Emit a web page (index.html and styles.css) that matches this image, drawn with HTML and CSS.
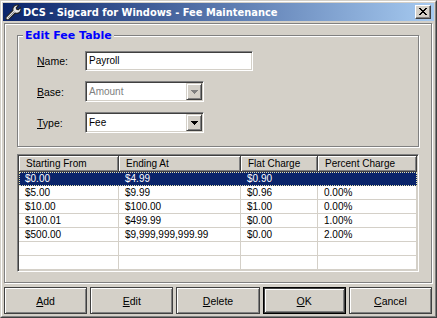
FILE: index.html
```html
<!DOCTYPE html>
<html>
<head>
<meta charset="utf-8">
<link rel="stylesheet" href="styles.css">
</head>
<body>
<div class="window">
  <div class="frame">
    <div class="titlebar">
      <svg class="app-icon" viewBox="0 0 16 16" width="16" height="16">
        <path d="M1.5 12.8 L8 6.3 A4.2 4.2 0 0 1 13.6 1.3 L11.2 3.8 L11.7 5.3 L13.2 5.8 L15.6 3.4 A4.2 4.2 0 0 1 10.2 9 L3.8 15.4 A1.7 1.7 0 0 1 1.5 12.8 Z" fill="#e8e8e8" stroke="#202020" stroke-width="1.1" stroke-linejoin="round"/>
        <path d="M3 14 L9.5 7.5" stroke="#909090" stroke-width="1"/>
      </svg>
      <span class="title">DCS - Sigcard for Windows - Fee Maintenance</span>
      <div class="close">
        <svg width="8" height="7" viewBox="0 0 8 7" shape-rendering="crispEdges">
          <path d="M0 0H2V1H3V2H5V1H6V0H8V1H7V2H6V3H5V4H6V5H7V6H8V7H6V6H5V5H3V6H2V7H0V6H1V5H2V4H3V3H2V2H1V1H0Z" fill="#000"/>
        </svg>
      </div>
    </div>
    <div class="client">
      <div class="panel">
        <fieldset class="group">
          <legend>Edit Fee Table</legend>
          <div class="form">
            <span class="lbl"><u>N</u>ame:</span>
            <div class="textbox">Payroll</div>
            <span class="lbl"><u>B</u>ase:</span>
            <div class="combo disabled">
              <span class="value">Amount</span>
              <span class="drop"><svg width="7" height="4" viewBox="0 0 7 4" shape-rendering="crispEdges"><path d="M0 0H7V1H6V2H5V3H4V4H3V3H2V2H1V1H0Z"/></svg></span>
            </div>
            <span class="lbl"><u>T</u>ype:</span>
            <div class="combo">
              <span class="value">Fee</span>
              <span class="drop"><svg width="7" height="4" viewBox="0 0 7 4" shape-rendering="crispEdges"><path d="M0 0H7V1H6V2H5V3H4V4H3V3H2V2H1V1H0Z"/></svg></span>
            </div>
          </div>
        </fieldset>
        <div class="listview">
          <div class="row head">
            <div class="hcell">Starting From</div>
            <div class="hcell">Ending At</div>
            <div class="hcell">Flat Charge</div>
            <div class="hcell">Percent Charge</div>
          </div>
          <div class="row sel">
            <div class="cell">$0.00</div><div class="cell">$4.99</div><div class="cell">$0.90</div><div class="cell"></div>
          </div>
          <div class="row">
            <div class="cell">$5.00</div><div class="cell">$9.99</div><div class="cell">$0.96</div><div class="cell">0.00%</div>
          </div>
          <div class="row">
            <div class="cell">$10.00</div><div class="cell">$100.00</div><div class="cell">$1.00</div><div class="cell">0.00%</div>
          </div>
          <div class="row">
            <div class="cell">$100.01</div><div class="cell">$499.99</div><div class="cell">$0.00</div><div class="cell">1.00%</div>
          </div>
          <div class="row">
            <div class="cell">$500.00</div><div class="cell">$9,999,999,999.99</div><div class="cell">$0.00</div><div class="cell">2.00%</div>
          </div>
          <div class="row">
            <div class="cell"></div><div class="cell"></div><div class="cell"></div><div class="cell"></div>
          </div>
          <div class="row">
            <div class="cell"></div><div class="cell"></div><div class="cell"></div><div class="cell"></div>
          </div>
        </div>
      </div>
      <div class="buttons">
        <div class="btn"><span><u>A</u>dd</span></div>
        <div class="btn"><span><u>E</u>dit</span></div>
        <div class="btn"><span><u>D</u>elete</span></div>
        <div class="btn default"><span><u>O</u>K</span></div>
        <div class="btn"><span><u>C</u>ancel</span></div>
      </div>
    </div>
  </div>
</div>
</body>
</html>
```

FILE: styles.css
```css
html, body {
  margin: 0;
  padding: 0;
  background: #d4d0c8;
}
body {
  font-family: "Liberation Sans", Arial, sans-serif;
  font-size: 10px;
  color: #000;
}
.window {
  width: 437px;
  height: 318px;
  box-sizing: border-box;
  border: 1px solid;
  border-color: #d4d0c8 #404040 #404040 #d4d0c8;
  background: #d4d0c8;
}
.frame {
  height: 100%;
  box-sizing: border-box;
  border: 1px solid;
  border-color: #fff #808080 #808080 #fff;
  padding: 1px;
  display: flex;
  flex-direction: column;
}
.titlebar {
  height: 18px;
  flex: none;
  display: flex;
  align-items: center;
  padding: 0 3px 0 2px;
  background: linear-gradient(to right, #0a246a, #a6caf0);
  color: #fff;
}
.app-icon {
  flex: none;
  margin-right: 2px;
}
.title {
  flex: 1;
  font-family: "DejaVu Sans", Verdana, sans-serif;
  font-weight: bold;
  font-size: 9.9px;
  white-space: nowrap;
  overflow: hidden;
}
.close {
  width: 16px;
  height: 14px;
  box-sizing: border-box;
  flex: none;
  background: #d4d0c8;
  border: 1px solid;
  border-color: #fff #404040 #404040 #fff;
  box-shadow: inset -1px -1px #808080;
  display: flex;
  align-items: center;
  justify-content: center;
  padding: 0 1px 1px 0;
}
.client {
  flex: 1;
  display: flex;
  flex-direction: column;
  gap: 4px;
  padding: 2px 2px 1px 1px;
}
.panel {
  height: 260px;
  flex: none;
  box-sizing: border-box;
  border: 1px solid #808080;
  box-shadow: inset 1px 1px #fff, 1px 1px #fff;
  padding: 5px 12px 10px 12px;
  display: flex;
  flex-direction: column;
  gap: 7px;
}
.group {
  margin: 0;
  padding: 0;
  border: 1px solid #808080;
  box-shadow: inset 1px 1px #fff, 1px 1px #fff;
  min-width: 0;
}
.group legend {
  margin-left: 5px;
  padding: 0 2px;
  background: #d4d0c8;
  color: #0000ff;
  font-family: "DejaVu Sans", Verdana, sans-serif;
  font-weight: bold;
  font-size: 11px;
  line-height: 13px;
}
.form {
  display: grid;
  grid-template-columns: 48px auto;
  row-gap: 10px;
  align-items: center;
  justify-items: start;
  padding: 9px 0 13px 19px;
}
.lbl {
  font-size: 10.5px;
}
.textbox, .combo {
  box-sizing: border-box;
  background: #fff;
  border: 1px solid;
  border-color: #808080 #fff #fff #808080;
  box-shadow: inset 1px 1px #404040, inset -1px -1px #d4d0c8;
}
.textbox {
  width: 168px;
  height: 20px;
  padding: 0 3px;
  line-height: 18px;
}
.combo {
  width: 119px;
  height: 21px;
  padding: 1px;
  display: flex;
}
.combo .value {
  flex: 1;
  padding-left: 2px;
  line-height: 17px;
}
.combo.disabled .value {
  color: #808080;
}
.drop {
  width: 16px;
  flex: none;
  box-sizing: border-box;
  background: #d4d0c8;
  border: 1px solid;
  border-color: #d4d0c8 #404040 #404040 #d4d0c8;
  box-shadow: inset 1px 1px #fff, inset -1px -1px #808080;
  display: flex;
  align-items: center;
  justify-content: center;
}
.drop svg {
  fill: #000;
}
.combo.disabled .drop svg {
  fill: #808080;
}
.listview {
  height: 118px;
  flex: none;
  box-sizing: border-box;
  background: #fff;
  border: 1px solid;
  border-color: #808080 #fff #fff #808080;
  box-shadow: inset 1px 1px #404040, inset -1px -1px #d4d0c8;
  padding: 1px;
  overflow: hidden;
}
.row {
  display: grid;
  grid-template-columns: 100px 122px 77px 99px;
  height: 14px;
}
.row.head {
  height: 16px;
}
.hcell {
  box-sizing: border-box;
  height: 16px;
  background: #d4d0c8;
  border-right: 1px solid #404040;
  border-bottom: 1px solid #404040;
  box-shadow: inset 1px 1px #fff, inset -1px -1px #808080;
  padding-left: 7px;
  line-height: 15px;
  white-space: nowrap;
  overflow: hidden;
}
.cell {
  box-sizing: border-box;
  height: 14px;
  border-right: 1px solid #d4d0c8;
  border-bottom: 1px solid #d4d0c8;
  padding-left: 6px;
  line-height: 14px;
  white-space: nowrap;
  overflow: hidden;
}
.row.sel {
  background: #0a246a;
  color: #fff;
  outline: 1px dotted #e8e4b0;
  outline-offset: -1px;
}
.row.sel .cell {
  border-color: #0a246a;
}
.buttons {
  height: 27px;
  flex: none;
  display: flex;
  gap: 3px;
}
.btn {
  flex: 1;
  box-sizing: border-box;
  border: 1px solid #404040;
  box-shadow: inset 1px 1px #fff, inset -1px -1px #808080;
  display: flex;
  align-items: center;
  justify-content: center;
  font-size: 10.5px;
}
.btn.default {
  border-color: #000;
  box-shadow: inset 0 0 0 1px #404040, inset 2px 2px #fff, inset -2px -2px #808080;
}
```
